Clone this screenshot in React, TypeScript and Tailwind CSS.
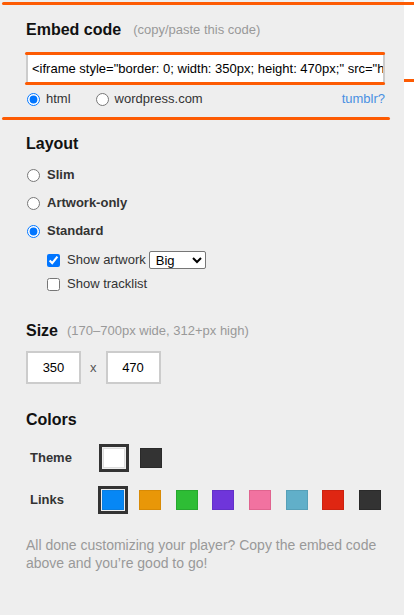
import { useState } from "react";

const linkColors = [
  { bg: "bg-[#0687f5]", border: "border-[#0a7ee0]" },
  { bg: "bg-[#e99708]", border: "border-[#d88a05]" },
  { bg: "bg-[#2ebd35]", border: "border-[#27a82e]" },
  { bg: "bg-[#6f35da]", border: "border-[#6330c8]" },
  { bg: "bg-[#f172a0]", border: "border-[#e0648f]" },
  { bg: "bg-[#61afc9]", border: "border-[#57a0b8]" },
  { bg: "bg-[#df2612]", border: "border-[#cc2210]" },
  { bg: "bg-[#333333]", border: "border-[#2a2a2a]" },
];

const embedCode =
  '<iframe style="border: 0; width: 350px; height: 470px;" src="https://bandcamp.com/EmbeddedPlayer/size=large/bgcol=ffffff/linkcol=0687f5/transparent=true/" seamless></iframe>';

function Swatch({ selected, bg, border }: { selected: boolean; bg: string; border: string }) {
  return (
    <div
      className={
        selected
          ? "flex h-[28px] w-[30px] items-center justify-center border-[3px] border-[#333]"
          : "flex h-[28px] w-[30px] items-center justify-center"
      }
    >
      <div className={`h-[20px] w-[22px] border ${bg} ${border}`} />
    </div>
  );
}

export default function App() {
  const [format, setFormat] = useState("html");
  const [layout, setLayout] = useState("standard");
  const [showArtwork, setShowArtwork] = useState(true);
  const [showTracklist, setShowTracklist] = useState(false);
  const [theme, setTheme] = useState(0);
  const [link, setLink] = useState(0);

  return (
    <div className="relative min-h-[615px] bg-white font-['Liberation_Sans',Arial,sans-serif] text-[13px]">
      <div className="min-h-[615px] w-[404px] bg-[#eeeeee] pl-[26px] pr-[19px] pt-[20px]">
        <div className="flex h-[20px] items-center">
          <h2 className="text-[16px] font-bold text-[#111]">Embed code</h2>
          <span className="ml-[12px] text-[13px] text-[#999]">(copy/paste this code)</span>
        </div>

        <input
          readOnly
          value={embedCode}
          className="mt-[12px] block h-[33px] w-full border-2 border-[#cccccc] bg-white pl-[4px] text-[13px] text-black outline-none"
        />

        <div className="mt-[6px] flex h-[16px] items-center text-[#333]">
          <label className="flex items-center">
            <input
              type="radio"
              name="format"
              checked={format === "html"}
              onChange={() => setFormat("html")}
              className="m-0 ml-[1px] h-[13px] w-[13px]"
            />
            <span className="ml-[6px]">html</span>
          </label>
          <label className="ml-[25px] flex items-center">
            <input
              type="radio"
              name="format"
              checked={format === "wordpress"}
              onChange={() => setFormat("wordpress")}
              className="m-0 h-[13px] w-[13px]"
            />
            <span className="ml-[6px]">wordpress.com</span>
          </label>
          <a className="ml-auto text-[#4a90e2]">tumblr?</a>
        </div>

        <h2 className="mt-[27px] flex h-[20px] items-center text-[16px] font-bold text-[#111]">Layout</h2>

        <div className="mt-[7px]">
          {[
            ["slim", "Slim"],
            ["artwork", "Artwork-only"],
            ["standard", "Standard"],
          ].map(([key, text]) => (
            <label key={key} className="flex h-[28px] items-center font-bold text-[#333]">
              <input
                type="radio"
                name="layout"
                checked={layout === key}
                onChange={() => setLayout(key)}
                className="m-0 ml-[1px] h-[13px] w-[13px]"
              />
              <span className="ml-[7px]">{text}</span>
            </label>
          ))}
        </div>

        <div className="ml-[21px] mt-[5px] flex h-[20px] items-center text-[#333]">
          <input
            type="checkbox"
            checked={showArtwork}
            onChange={(e) => setShowArtwork(e.target.checked)}
            className="m-0 h-[13px] w-[13px]"
          />
          <span className="ml-[7px]">Show artwork</span>
          <select className="ml-[3px] h-[18px] w-[57px] rounded-[2px] border border-[#767676] bg-white pl-[2px] text-[13px] text-black">
            <option>Big</option>
            <option>Small</option>
          </select>
        </div>
        <label className="ml-[21px] mt-[4px] flex h-[20px] items-center text-[#333]">
          <input
            type="checkbox"
            checked={showTracklist}
            onChange={(e) => setShowTracklist(e.target.checked)}
            className="m-0 h-[13px] w-[13px]"
          />
          <span className="ml-[7px]">Show tracklist</span>
        </label>

        <div className="mt-[27px] flex h-[20px] items-center">
          <h2 className="text-[16px] font-bold text-[#111]">Size</h2>
          <span className="ml-[9px] text-[13px] text-[#999]">(170–700px wide, 312+px high)</span>
        </div>

        <div className="mt-[10px] flex items-center gap-[9px]">
          <input
            readOnly
            value="350"
            className="h-[33px] w-[55px] border-2 border-[#cccccc] bg-white text-center text-[13px] text-black outline-none"
          />
          <span className="text-[#555]">x</span>
          <input
            readOnly
            value="470"
            className="h-[33px] w-[55px] border-2 border-[#cccccc] bg-white text-center text-[13px] text-black outline-none"
          />
        </div>

        <h2 className="mt-[26px] flex h-[20px] items-center text-[16px] font-bold text-[#111]">Colors</h2>

        <div className="mt-[14px] flex items-center">
          <span className="w-[73px] pl-[4px] font-bold text-[#333]">Theme</span>
          <div className="flex gap-[6.67px]">
            <div onClick={() => setTheme(0)}>
              <Swatch selected={theme === 0} bg="bg-white" border="border-[#dddddd]" />
            </div>
            <div onClick={() => setTheme(1)}>
              <Swatch selected={theme === 1} bg="bg-[#333333]" border="border-[#2a2a2a]" />
            </div>
          </div>
        </div>

        <div className="mt-[14px] flex items-center">
          <span className="w-[73px] pl-[4px] font-bold text-[#333]">Links</span>
          <div className="flex gap-[6.67px]">
            {linkColors.map((c, i) => (
              <div key={i} onClick={() => setLink(i)}>
                <Swatch selected={link === i} bg={c.bg} border={c.border} />
              </div>
            ))}
          </div>
        </div>

        <p className="mt-[22px] text-[14px] leading-[18px] text-[#999]">
          All done customizing your player? Copy the embed code above and you’re good to go!
        </p>
      </div>

      {/* orange highlight marks drawn over the panel */}
      <div className="absolute left-[2px] top-[2px] h-[3px] w-[420px] rounded-full bg-[#fd5b03]" />
      <div className="absolute left-[25px] top-[52px] h-[3px] w-[360px] rounded-full bg-[#fd5b03]" />
      <div className="absolute left-[25px] top-[82px] h-[3px] w-[360px] rounded-full bg-[#fd5b03]" />
      <div className="absolute left-[404px] top-[79px] h-[3px] w-[10px] bg-[#fd5b03]" />
      <div className="absolute left-[2px] top-[117px] h-[3px] w-[388px] rounded-full bg-[#fd5b03]" />
    </div>
  );
}
